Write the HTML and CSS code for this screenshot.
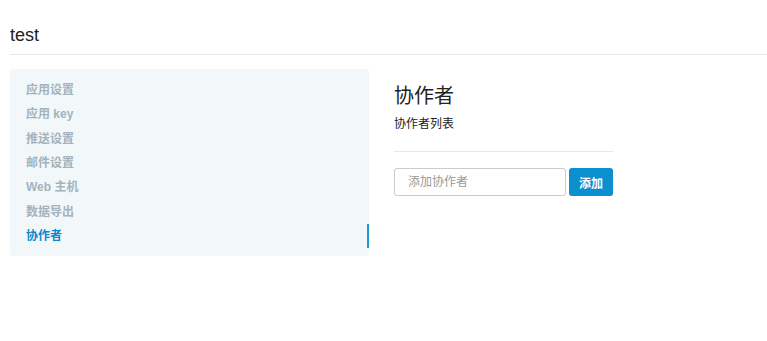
FILE: index.html
```html
<!DOCTYPE html>
<html lang="zh-CN">
<head>
<meta charset="utf-8">
<title>test</title>
<link rel="stylesheet" href="styles.css">
</head>
<body>
<div class="page">
  <header class="header">
    <h1 class="app-name">test</h1>
  </header>
  <div class="layout">
    <nav class="sidebar">
      <a class="nav-item">应用设置</a>
      <a class="nav-item">应用 key</a>
      <a class="nav-item">推送设置</a>
      <a class="nav-item">邮件设置</a>
      <a class="nav-item">Web 主机</a>
      <a class="nav-item">数据导出</a>
      <a class="nav-item active">协作者</a>
    </nav>
    <main class="content">
      <h2 class="title">协作者</h2>
      <p class="subtitle">协作者列表</p>
      <div class="divider"></div>
      <form class="add-form">
        <input class="add-input" type="text" placeholder="添加协作者">
        <button class="add-btn" type="button">添加</button>
      </form>
    </main>
  </div>
</div>
</body>
</html>
```
FILE: styles.css
```css
* { box-sizing: border-box; }
html, body { margin: 0; padding: 0; background: #fff; }
body {
  font-family: "Liberation Sans", "Noto Sans CJK SC", sans-serif;
  color: #333;
  font-size: 12px;
}
.page { padding: 0 0 0 10px; }
.header {
  height: 55px;
  border-bottom: 1px solid #e6e6e6;
  padding-top: 24px;
}
.app-name {
  margin: 0;
  font-size: 18px;
  font-weight: normal;
  line-height: 22px;
  color: #222;
}
.layout {
  display: flex;
  align-items: flex-start;
  margin-top: 14px;
}
.sidebar {
  width: 359px;
  background: #f2f7fa;
  border-radius: 4px;
  padding: 9px 0 8px;
  display: flex;
  flex-direction: column;
}
.nav-item {
  display: block;
  padding: 0 16px;
  line-height: 24.35px;
  height: 24.35px;
  font-size: 12px;
  font-weight: bold;
  color: #a3b3bd;
  text-decoration: none;
}
.nav-item.active {
  color: #0a8ac9;
  border-right: 2px solid #1b9ad6;
}
.content {
  margin-left: 25px;
  width: 219px;
}
.title {
  margin: 15px 0 0;
  font-size: 20px;
  line-height: 24px;
  font-weight: normal;
  color: #222;
}
.subtitle {
  margin: 8px 0 0;
  font-size: 12px;
  line-height: 16px;
  color: #222;
}
.divider {
  margin-top: 19px;
  border-top: 1px solid #e8e8e8;
}
.add-form {
  display: flex;
  gap: 3px;
  margin-top: 16px;
}
.add-input {
  width: 172px;
  height: 28px;
  border: 1px solid #ccc;
  border-radius: 3px;
  padding: 0 13px;
  font-family: inherit;
  font-size: 12px;
  color: #333;
  outline: none;
}
.add-input::placeholder { color: #999; }
.add-btn {
  width: 44px;
  height: 28px;
  border: none;
  border-radius: 3px;
  background: #0b8fcf;
  color: #fff;
  font-family: inherit;
  font-size: 12px;
  font-weight: bold;
  padding: 0;
}
```
